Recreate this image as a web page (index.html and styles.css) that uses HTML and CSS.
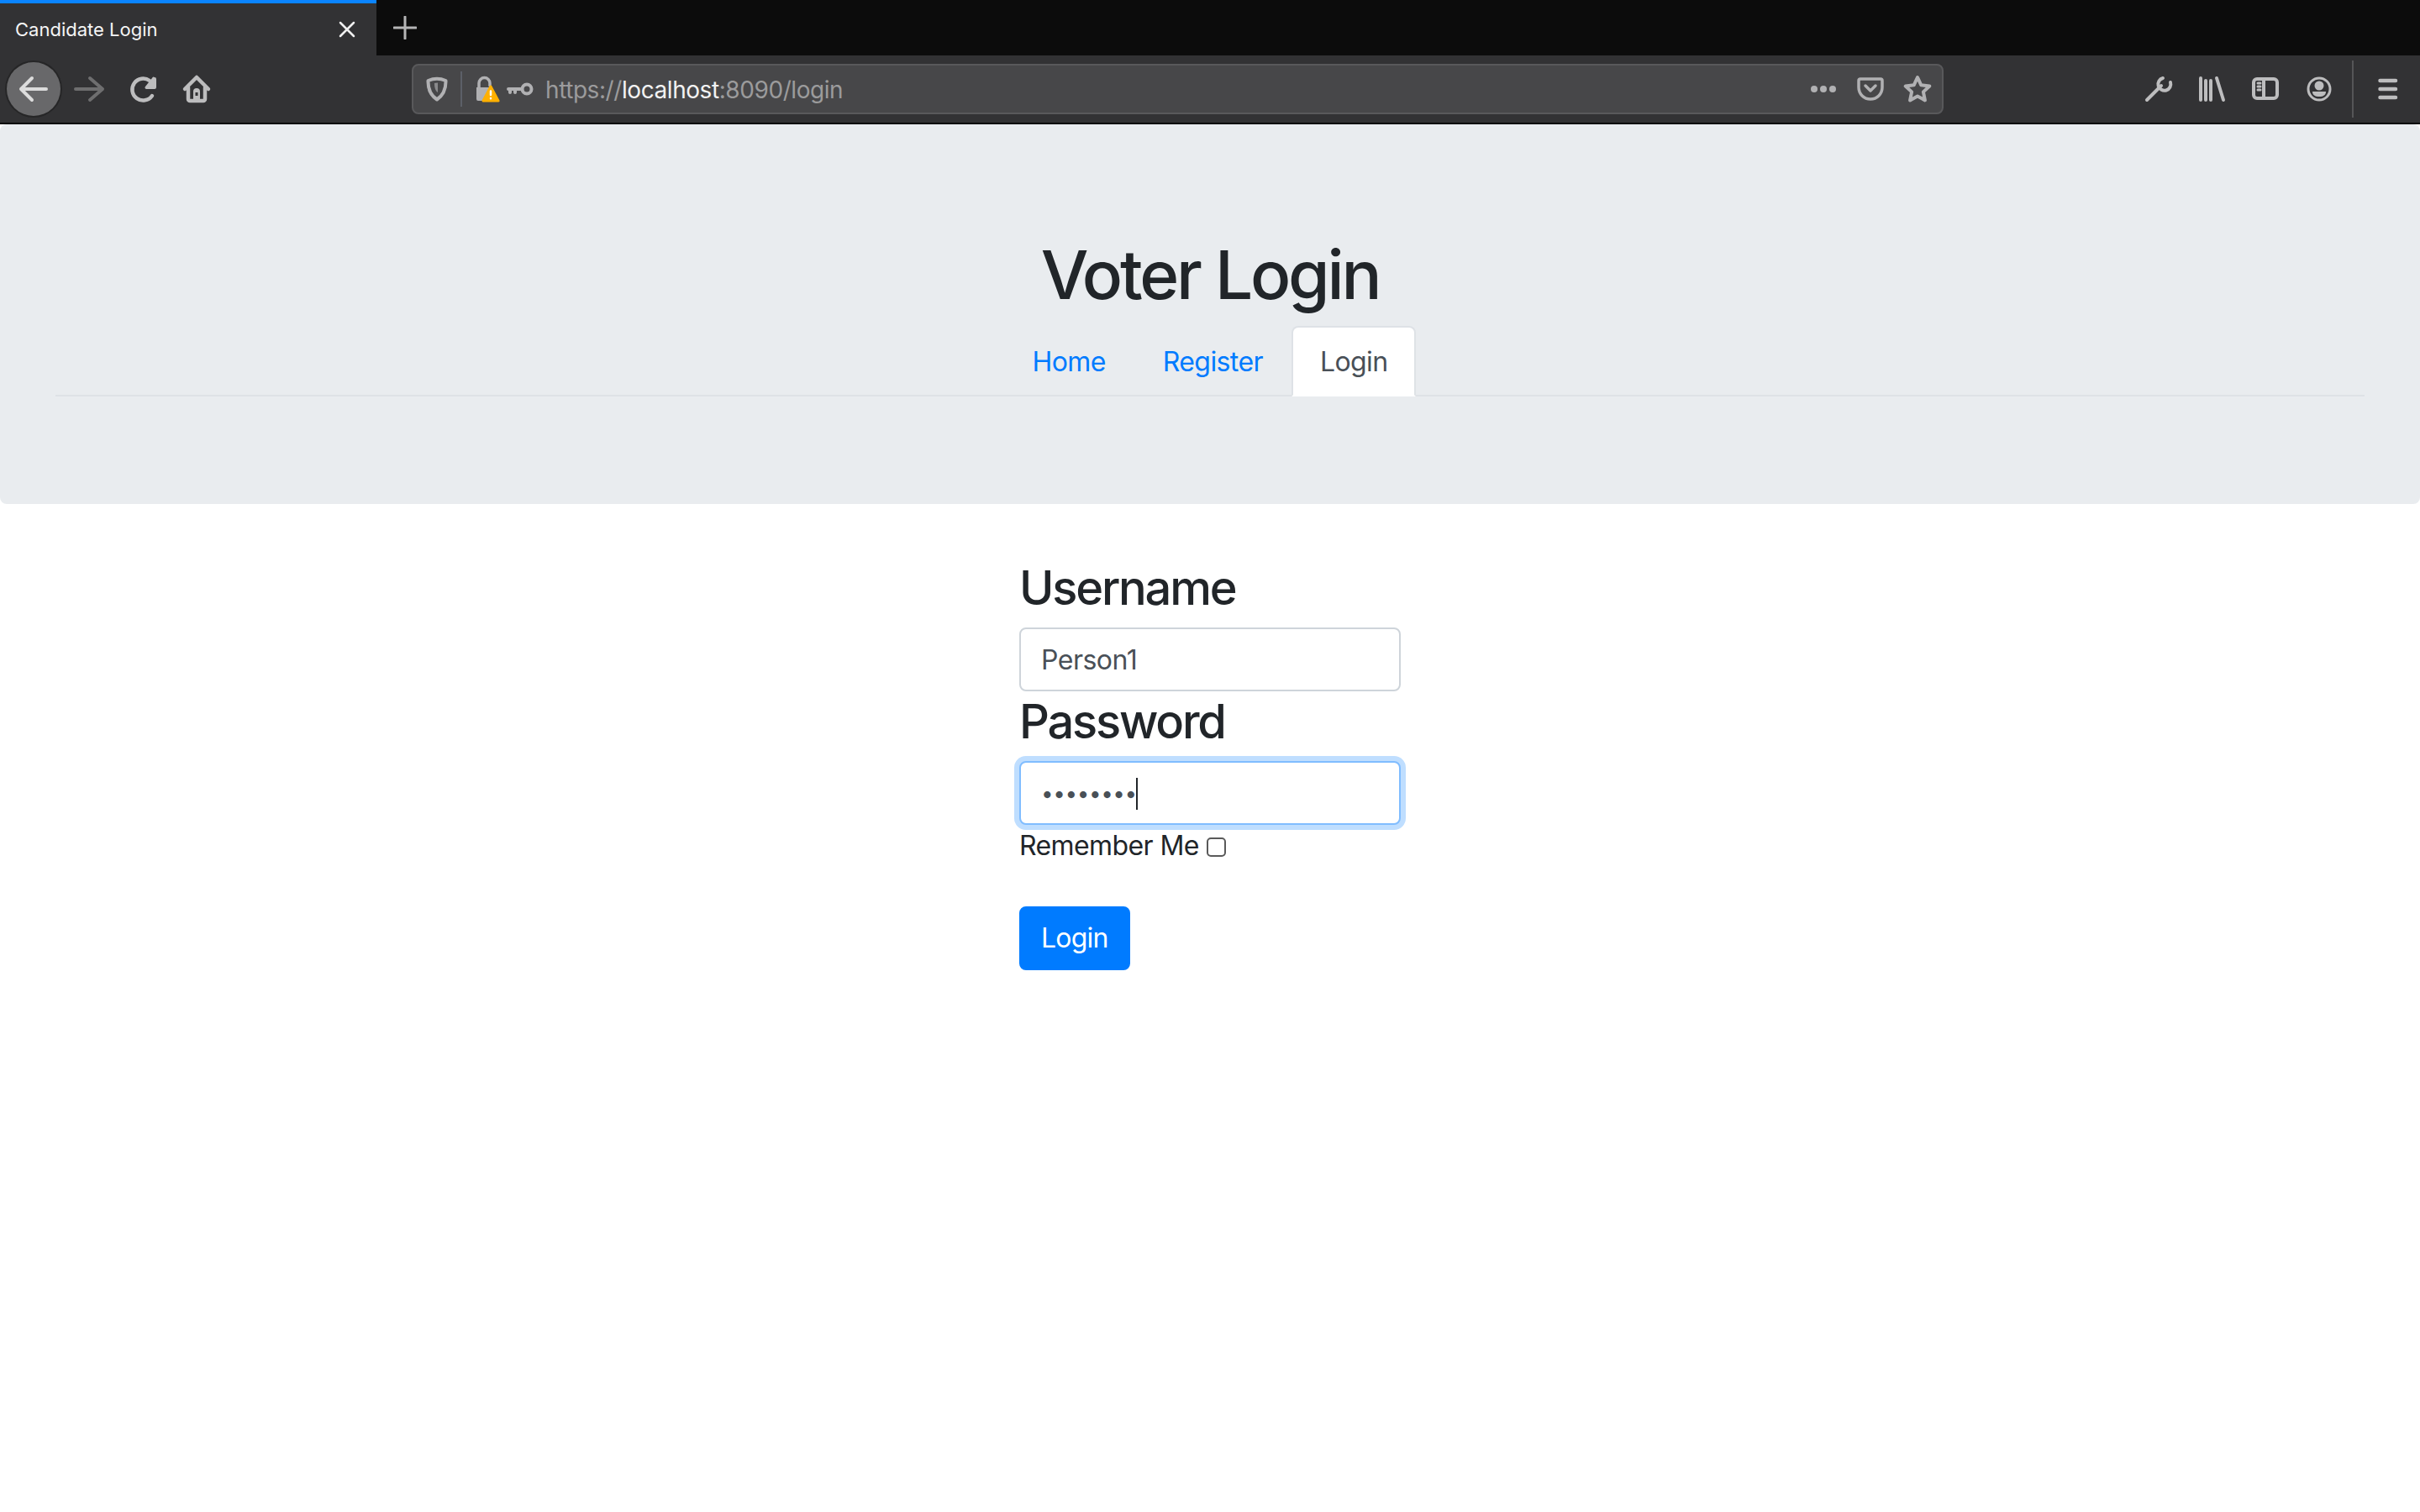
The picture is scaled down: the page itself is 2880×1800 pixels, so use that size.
FILE: index.html
```html
<!DOCTYPE html>
<html lang="en">

<head>
    <meta charset="UTF-8">
    <title>Candidate Login</title>
    <link rel="stylesheet" href="styles.css">
</head>

<body>
    <div class="tabbar">
        <div class="tab">
            <span class="tab-title">Candidate Login</span>
            <svg class="tab-close" width="20" height="20" viewBox="0 0 20 20"><path d="M2 2l16 16M18 2L2 18"/></svg>
        </div>
        <svg class="tab-new" width="28" height="28" viewBox="0 0 28 28"><path d="M14 1v26M1 14h26"/></svg>
    </div>

    <div class="toolbar">
        <button class="tool tool-back">
            <svg width="64" height="64" viewBox="0 0 64 64"><path d="M17 32h30M30 19L17 32l13 13"/></svg>
        </button>
        <button class="tool tool-forward">
            <svg width="64" height="64" viewBox="0 0 64 64"><path d="M16 32h32M33 19l15 13-15 13"/></svg>
        </button>
        <button class="tool tool-heavy">
            <svg width="64" height="64" viewBox="0 0 64 64"><path d="M43 40A13 13 0 1 1 40 22"/><path class="solid" d="M46 18a2 2 0 0 1 2 2v10a2 2 0 0 1-2 2H36a2 2 0 0 1-1-3l8-10a2 2 0 0 1 3-1z"/></svg>
        </button>
        <button class="tool tool-heavy">
            <svg width="64" height="64" viewBox="0 0 64 64"><path d="M18 32l14-14 14 14M22 30v14a2 2 0 0 0 2 2h16a2 2 0 0 0 2-2V30"/><path class="solid" d="M28 35a4 4 0 0 1 8 0v11h-8z"/><rect class="hole" x="30.500" y="36" width="3" height="4"/></svg>
        </button>

        <div class="urlbar">
            <span class="url-shield">
                <svg width="26" height="30" viewBox="0 0 26 30"><path d="M2.500 5Q13 .5 23.500 5q.5 15-10.500 22.500Q2 20 2.500 5z"/><path class="shield-mark" d="M14 7.500v11.500c-3-2-4-6-4-11z"/></svg>
            </span>
            <span class="url-sep"></span>
            <svg class="url-lock" width="30" height="32" viewBox="0 0 30 32">
                <path class="lock-shackle" d="M5 14V9a6.500 6.500 0 0 1 13 0v3"/>
                <path class="lock-body" d="M2 14h17l-6 12v4H4a2 2 0 0 1-2-2z"/>
                <path class="warn-body" d="M19 13l9 17H10z"/>
                <path class="warn-mark" d="M19 18.500v4.500M19 27v.2"/>
            </svg>
            <svg class="url-key" width="32" height="16" viewBox="0 0 32 16">
                <circle cx="24" cy="8" r="5.500"/>
                <path d="M17 8H2M4 8v4M10 8v4"/>
            </svg>
            <span class="url-text"><span class="url-dim">https://</span>localhost<span class="url-dim">:8090/login</span></span>
            <span class="url-actions">
                <svg class="url-dots" width="32" height="10" viewBox="0 0 32 10"><circle cx="5" cy="5" r="4"/><circle cx="16" cy="5" r="4"/><circle cx="27" cy="5" r="4"/></svg>
                <svg class="url-pocket" width="32" height="28" viewBox="0 0 32 28"><path d="M4 2h24a2 2 0 0 1 2 2v8a14 14 0 0 1-28 0V4a2 2 0 0 1 2-2zM10 10l6 6 6-6"/></svg>
                <svg class="url-star" width="34" height="34" viewBox="0 0 34 34"><path d="M17 3l4.300 9.300 10 1.200-7.400 6.900 2 10L17 25.400 8.100 30.400l2-10-7.400-6.900 10-1.200z"/></svg>
            </span>
        </div>

        <button class="tool tool-first">
            <svg width="64" height="64" viewBox="0 0 64 64"><path d="M19 45l17-17"/><path d="M38 19A7.500 7.500 0 1 0 47 24"/></svg>
        </button>
        <button class="tool">
            <svg width="64" height="64" viewBox="0 0 64 64"><path d="M19 19v26M25 22v23M31 22v23M38 19l8 26"/></svg>
        </button>
        <button class="tool">
            <svg width="64" height="64" viewBox="0 0 64 64"><rect x="18" y="20" width="28" height="23" rx="4"/><path d="M30 20v23"/><path class="thin" d="M23 25h3M23 29h3M23 33h3"/></svg>
        </button>
        <button class="tool">
            <svg width="64" height="64" viewBox="0 0 64 64"><circle class="thin" cx="32" cy="32" r="13"/><circle class="solid" cx="32" cy="28" r="5.500"/><path class="solid" d="M24 35h16c0 4-3 6-8 6s-8-2-8-6z"/></svg>
        </button>
        <span class="tool-sep"></span>
        <button class="tool tool-heavy">
            <svg width="64" height="64" viewBox="0 0 64 64"><path d="M22.500 22h18.500M22.500 32h18.500M22.500 42h18.500"/></svg>
        </button>
    </div>

    <div class="jumbotron">
        <h1>Voter Login</h1>
        <ul class="nav-tabs">
            <li><a href="#">Home</a></li>
            <li><a href="#">Register</a></li>
            <li><a href="#" class="active">Login</a></li>
        </ul>
    </div>

    <form class="login-form">
        <label class="field-label" for="username">Username</label>
        <input class="field" type="text" id="username" value="Person1">
        <label class="field-label" for="password">Password</label>
        <div class="field-wrap">
            <input class="field field-focus" type="password" id="password" value="password">
            <span class="caret"></span>
        </div>
        <div class="remember">
            <label for="remember">Remember Me</label>
            <input type="checkbox" id="remember">
        </div>
        <button class="btn-login" type="button">Login</button>
    </form>
</body>

</html>
```

FILE: styles.css
```css
* {
    box-sizing: border-box;
}

body {
    margin: 0;
    background: #fff;
    color: #212529;
    font-family: Inter, "Liberation Sans", sans-serif;
    font-size: 32px;
    line-height: 48px;
    letter-spacing: -0.6px;
}

svg {
    display: block;
    fill: none;
    stroke-linecap: round;
    stroke-linejoin: round;
}

/* browser tabs */
.tabbar {
    display: flex;
    align-items: center;
    height: 66px;
    background: #0c0c0c;
}

.tab {
    display: flex;
    align-items: center;
    justify-content: space-between;
    width: 448px;
    height: 66px;
    padding: 0 25px 0 18px;
    background: #323234;
    border-top: 4px solid #0a84ff;
}

.tab-title {
    color: #f5f5f5;
    font-size: 22px;
    line-height: 30px;
    letter-spacing: 0;
}

.tab-close {
    stroke: #f0f0f0;
    stroke-width: 2.500;
}

.tab-new {
    margin-left: 20px;
    stroke: #b5b5b6;
    stroke-width: 3;
}

/* browser toolbar */
.toolbar {
    display: flex;
    align-items: center;
    height: 82px;
    padding-left: 8px;
    background: #323234;
    border-bottom: 2px solid #050505;
}

.tool {
    flex: none;
    width: 64px;
    height: 64px;
    padding: 0;
    background: none;
    border: none;
}

.tool svg {
    stroke: #bdbdbe;
    stroke-width: 4;
}

.tool-heavy svg {
    stroke-width: 4.500;
}

.tool svg .solid {
    fill: #bdbdbe;
    stroke: none;
}

.tool svg .hole {
    fill: #323234;
    stroke: none;
}

.tool svg .thin {
    stroke-width: 3;
}

.tool-back {
    margin-right: 2px;
    background: #68686a;
    border-radius: 50%;
    box-shadow: 0 0 0 2px #262627;
}

.tool-back svg {
    stroke: #dcdcdc;
}

.tool-forward svg {
    stroke: #6e6e6f;
}

.urlbar {
    display: flex;
    align-items: center;
    width: 1823px;
    height: 60px;
    margin: 0 223px 0 224px;
    background: #474749;
    border: 2px solid #59595b;
    border-radius: 8px;
}

.url-shield {
    display: flex;
    justify-content: center;
    width: 56px;
}

.url-shield svg {
    stroke: #b1b1b3;
    stroke-width: 4;
}

.url-shield .shield-mark {
    fill: #8a8a8c;
    stroke: none;
}

.url-sep {
    width: 2px;
    height: 42px;
    background: #5c6068;
}

.url-lock {
    margin-left: 15px;
}

.lock-shackle {
    stroke: #b1b1b3;
    stroke-width: 3.500;
}

.lock-body {
    fill: #b1b1b3;
}

.warn-body {
    fill: #ffb000;
    stroke: #ffb000;
    stroke-width: 3;
}

.warn-mark {
    stroke: #fff;
    stroke-width: 2.500;
}

.url-key {
    margin-left: 8px;
    stroke: #b1b1b3;
    stroke-width: 4;
}

.url-text {
    margin-left: 14px;
    padding-top: 2px;
    color: #f2f2f2;
    font-size: 28px;
    line-height: 40px;
    letter-spacing: -0.43px;
}

.url-dim {
    color: #9b9b9c;
}

.url-actions {
    display: flex;
    align-items: center;
    margin-left: auto;
    padding-right: 12px;
}

.url-dots {
    fill: #b1b1b3;
}

.url-pocket {
    margin-left: 24px;
    stroke: #b1b1b3;
    stroke-width: 3.500;
}

.url-star {
    margin-left: 23px;
    stroke: #b1b1b3;
    stroke-width: 4;
}

.tool-sep {
    flex: none;
    width: 2px;
    height: 68px;
    margin: 0 9px 0 7px;
    background: #555557;
}

/* page header */
.jumbotron {
    padding: 128px 66px;
    margin-bottom: 64px;
    background: #e9ecef;
    border-radius: 8px;
}

h1 {
    margin: 0 0 10px;
    font-size: 80px;
    font-weight: 500;
    line-height: 102px;
    letter-spacing: -3.200px;
    text-align: center;
}

.nav-tabs {
    display: flex;
    justify-content: center;
    margin: 0;
    padding: 0;
    list-style: none;
    border-bottom: 2px solid #dee2e6;
}

.nav-tabs li {
    margin-bottom: -2px;
}

.nav-tabs a {
    display: block;
    padding: 17px 32px 15px;
    color: #007bff;
    text-decoration: none;
    border: 2px solid transparent;
    border-radius: 8px 8px 0 0;
}

.nav-tabs a.active {
    color: #495057;
    background: #fff;
    border-color: #dee2e6 #dee2e6 #fff;
}

/* login form */
.login-form {
    width: 454px;
    margin: 0 auto;
}

.field-label {
    display: block;
    margin-bottom: 10px;
    font-size: 56px;
    font-weight: 500;
    line-height: 73px;
    letter-spacing: -2.200px;
}

.field-wrap {
    position: relative;
}

.field {
    display: block;
    width: 100%;
    height: 76px;
    padding: 12px 24px;
    color: #495057;
    font-family: inherit;
    font-size: 32px;
    letter-spacing: -0.5px;
    background: #fff;
    border: 2px solid #ced4da;
    border-radius: 8px;
    outline: none;
}

.field-focus {
    font-size: 26px;
    letter-spacing: -0.400px;
    border-color: #80bdff;
    box-shadow: 0 0 0 6px #bfdeff;
}

.caret {
    position: absolute;
    left: 139px;
    top: 20px;
    width: 2px;
    height: 38px;
    background: #212529;
}

.remember {
    display: flex;
    align-items: center;
    gap: 9px;
    padding-top: 2px;
    height: 48px;
}

.remember input {
    appearance: none;
    width: 23px;
    height: 23px;
    margin: 2px 0 0;
    background: #fff;
    border: 2px solid #5a5a5a;
    border-radius: 5px;
}

.btn-login {
    display: block;
    height: 76px;
    margin-top: 49px;
    padding: 12px 24px;
    color: #fff;
    font-family: inherit;
    font-size: 32px;
    line-height: 48px;
    letter-spacing: -0.8px;
    background: #007bff;
    border: 2px solid #007bff;
    border-radius: 8px;
}
```
